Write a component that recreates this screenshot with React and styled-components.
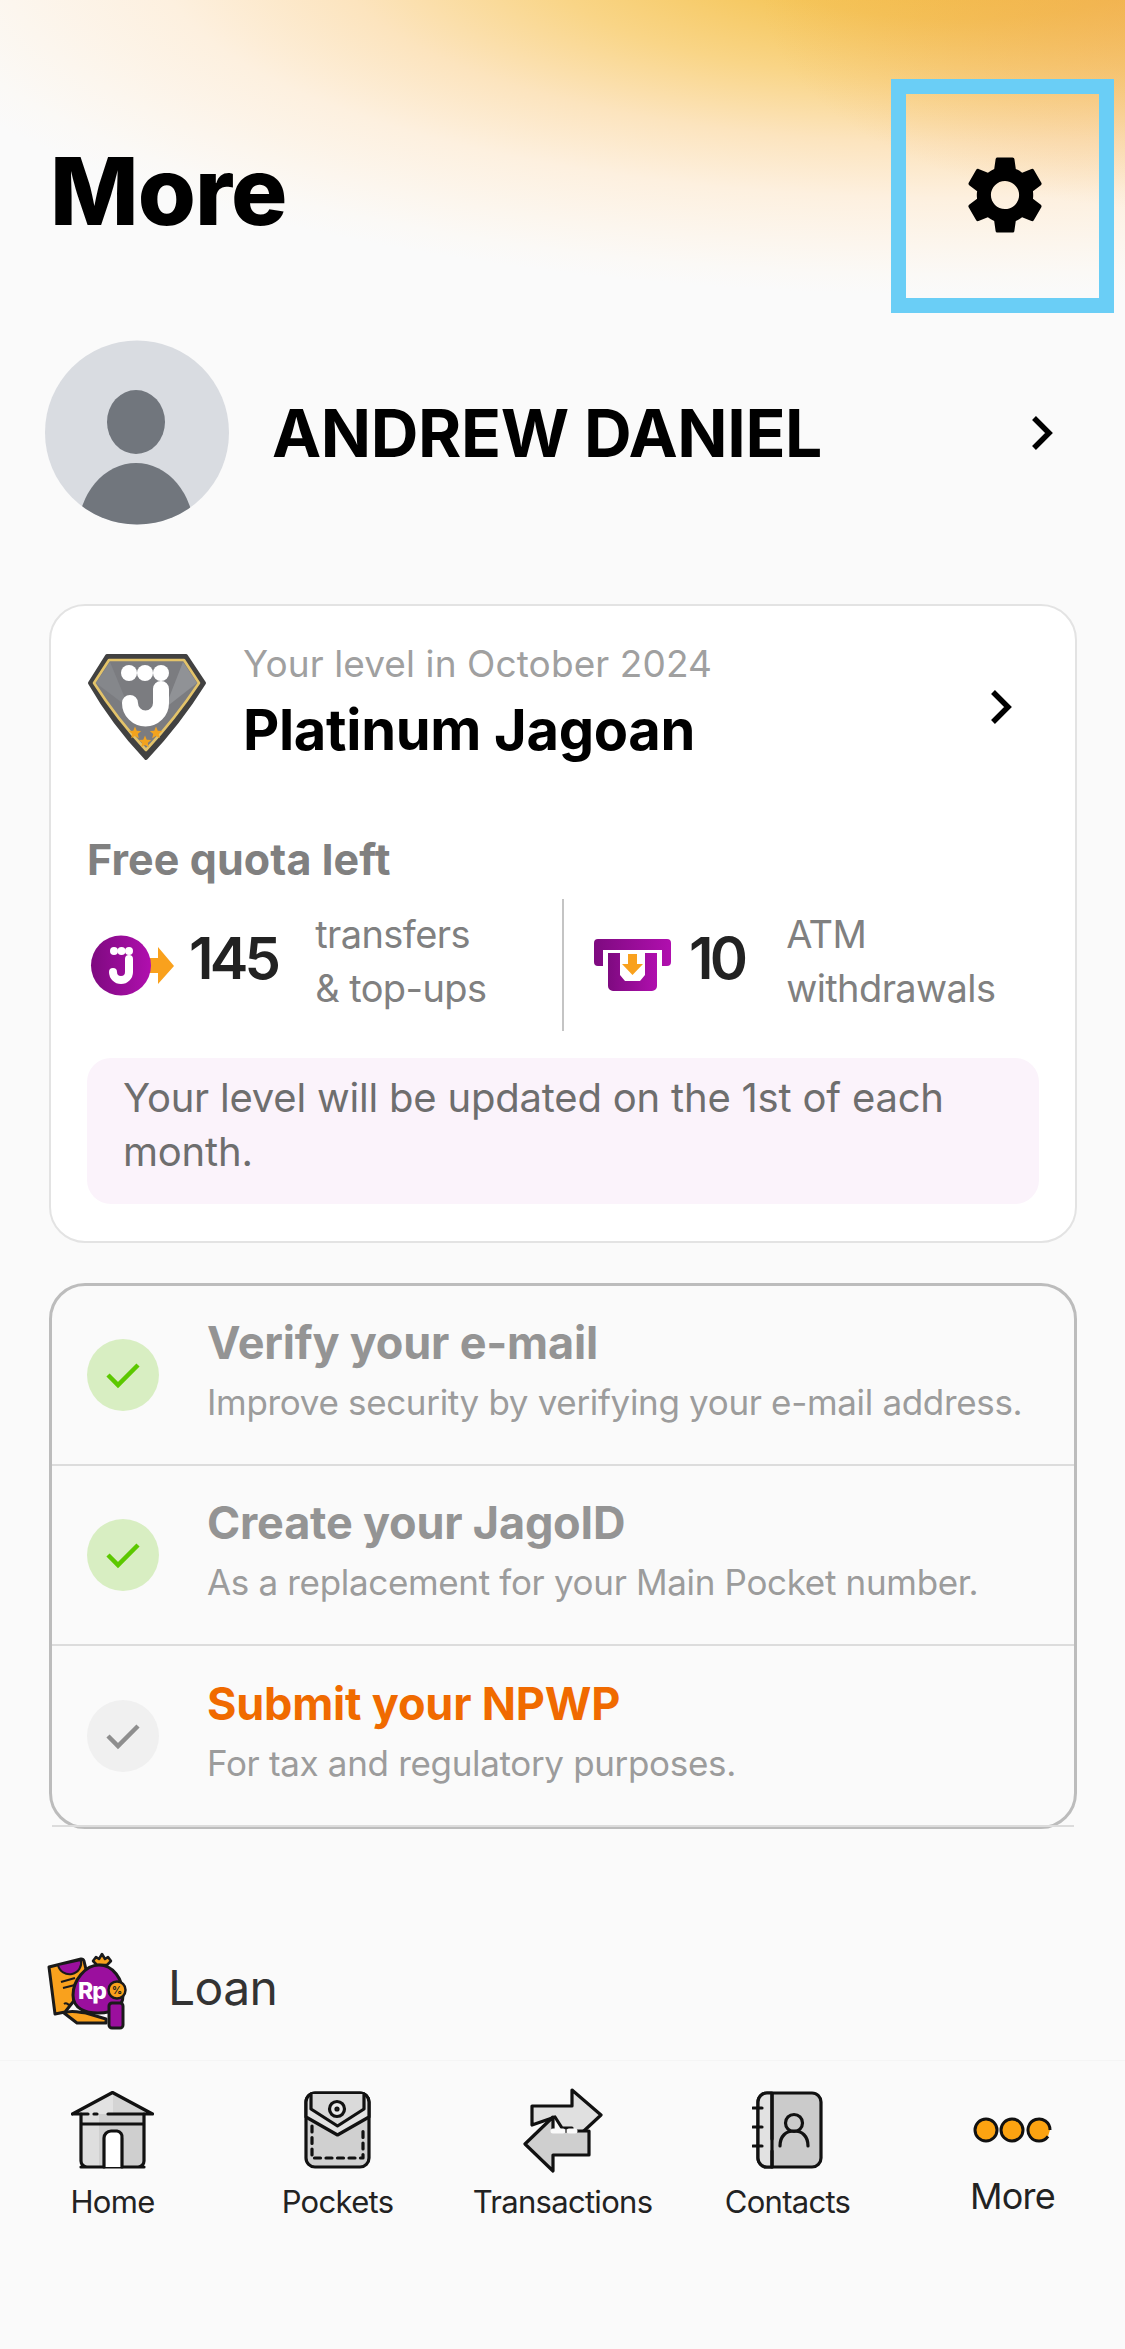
import React from "react";
import styled, { createGlobalStyle } from "styled-components";
import { MdSettings } from "react-icons/md";

const Global = createGlobalStyle`
  html, body { margin: 0; padding: 0; background: #fafafa; }
  * { box-sizing: border-box; }
  body { font-family: "Inter", "Liberation Sans", sans-serif; }
`;

const Page = styled.div`
  width: 1125px;
  height: 2349px;
  overflow: hidden;
  display: flex;
  flex-direction: column;
  background:
    radial-gradient(ellipse 420px 220px at 1180px -10px, rgba(238,160,70,.55) 0%, rgba(240,170,80,0) 100%),
    radial-gradient(ellipse 1120px 345px at 960px -50px, #f4bf45 0%, #f5c65a 20%, #f9d587 38%, #fce4be 56%, #fdf0df 72%, #fcf6ee 86%, #fbf9f6 94%, #fafafa 100%);
  background-repeat: no-repeat;
`;

const Header = styled.header`
  display: flex;
  align-items: center;
  justify-content: space-between;
  padding: 79px 11px 0 50px;
`;
const Title = styled.h1`
  margin: 0 0 10px;
  font-size: 94px;
  line-height: 1;
  font-weight: 800;
  letter-spacing: -0.9px;
  color: #000;
`;
const GearBox = styled.div`
  width: 223px;
  height: 234px;
  border: 15px solid #6acef6;
  display: flex;
  align-items: center;
  justify-content: center;
  padding-bottom: 2px;
  padding-left: 4px;
`;

const Profile = styled.section`
  display: flex;
  align-items: center;
  margin-top: 27px;
  padding: 0 71px 0 45px;
`;
const Name = styled.div`
  flex: 1;
  margin-left: 43px;
  font-size: 66px;
  font-weight: 700;
  letter-spacing: -0.4px;
  color: #000;
`;

const Card = styled.section`
  margin: ${(p) => p.$top}px 48px 0 49px;
  border-radius: 36px;
  border: ${(p) => (p.$strong ? "3px solid #bcbcbc" : "2px solid #e3e3e3")};
  background: ${(p) => (p.$strong ? "transparent" : "#fff")};
  height: ${(p) => p.$h}px;
`;
const LevelCard = styled(Card)`
  padding: 47px 36px 0 36px;
`;
const LevelRow = styled.div`
  display: flex;
  align-items: center;
`;
const LevelText = styled.div`
  flex: 1;
  align-self: flex-start;
  margin: -12px 0 -10px 36px;
`;
const LevelSub = styled.div`
  font-size: 37px;
  line-height: 46px;
  color: #a0a0a0;
  letter-spacing: 0.1px;
`;
const LevelName = styled.div`
  margin-top: 10px;
  font-size: 56px;
  line-height: 66px;
  font-weight: 700;
  letter-spacing: -0.3px;
  color: #000;
`;
const LevelChevron = styled.div`
  margin-right: 26px;
  display: flex;
`;
const QuotaLabel = styled.div`
  margin-top: 73px;
  font-size: 43px;
  line-height: 50px;
  font-weight: 700;
  letter-spacing: 0.1px;
  color: #808080;
`;
const Quotas = styled.div`
  display: flex;
  margin-top: 15px;
  height: 132px;
`;
const Quota = styled.div`
  display: flex;
  align-items: center;
  width: ${(p) => p.$w}px;
  padding-left: ${(p) => p.$pl}px;
  border-left: ${(p) => (p.$divider ? "2px solid #c4c4c4" : "none")};
`;
const QuotaNum = styled.div`
  font-size: 58px;
  font-weight: 600;
  margin-left: ${(p) => p.$ml}px;
  margin-bottom: 14px;
  letter-spacing: -3.8px;
  color: #222;
`;
const QuotaText = styled.div`
  margin-left: ${(p) => p.$ml}px;
  margin-bottom: 8px;
  font-size: 38px;
  line-height: 54px;
  color: #808080;
  letter-spacing: -0.6px;
`;
const Note = styled.div`
  margin-top: 27px;
  height: 146px;
  border-radius: 24px;
  background: #fbf3fb;
  padding: 13px 36px;
  font-size: 40px;
  line-height: 54px;
  letter-spacing: -0.2px;
  color: #6e6e6e;
`;

const TaskRow = styled.div`
  height: 180px;
  display: flex;
  align-items: center;
  padding-left: 35px;
  border-bottom: 2px solid #dcdcdc;
  &:last-child { height: 181px; }
`;
const TaskCircle = styled.div`
  width: 72px;
  height: 72px;
  border-radius: 50%;
  background: ${(p) => (p.$done ? "#d8eec2" : "#f0f0f0")};
  display: flex;
  align-items: center;
  justify-content: center;
  flex-shrink: 0;
`;
const TaskText = styled.div`
  margin-left: 48px;
  padding-bottom: 10px;
`;
const TaskTitle = styled.div`
  font-size: 45px;
  line-height: 56px;
  margin-bottom: 8px;
  font-weight: 700;
  letter-spacing: -0.2px;
  color: ${(p) => (p.$active ? "#f06a00" : "#949494")};
`;
const TaskSub = styled.div`
  font-size: 35px;
  line-height: 46px;
  letter-spacing: -0.33px;
  color: #9c9c9c;
`;

const Loan = styled.div`
  display: flex;
  align-items: center;
  margin-top: 123px;
  padding-left: 47px;
`;
const LoanLabel = styled.div`
  margin-left: 39px;
  padding-bottom: 8px;
  font-size: 48px;
  color: #333;
  letter-spacing: -0.6px;
`;

const Nav = styled.nav`
  margin-top: auto;
  height: 289px;
  background: #fafafa;
  border-top: 1px solid #f5f5f5;
  display: grid;
  grid-template-columns: repeat(5, 225px);
`;
const NavItem = styled.div`
  display: flex;
  flex-direction: column;
  align-items: center;
`;
const NavIcon = styled.div`
  height: 86px;
  margin-top: 26px;
  display: flex;
  align-items: center;
  justify-content: center;
`;
const NavLabel = styled.div`
  margin-top: 7px;
  font-size: 31px;
  line-height: 44px;
  letter-spacing: -0.7px;
  color: #222;
`;
const MoreLabel = styled(NavLabel)`
  margin-top: 1px;
  font-size: 36px;
`;

const Chevron = () => (
  <svg width="24" height="36" viewBox="0 0 24 36" fill="none">
    <path d="M4 3l15 15L4 33" stroke="#000" strokeWidth="5.5" />
  </svg>
);

const Avatar = () => (
  <svg width="184" height="185" viewBox="0 0 184 185">
    <defs>
      <clipPath id="av"><circle cx="92" cy="92.5" r="92" /></clipPath>
    </defs>
    <circle cx="92" cy="92.5" r="92" fill="#d9dce1" />
    <ellipse cx="91" cy="82" rx="29" ry="32" fill="#71767d" />
    <g clipPath="url(#av)">
      <ellipse cx="91" cy="192" rx="58" ry="69" fill="#71767d" />
    </g>
  </svg>
);

const Star = ({ x, y, r = 6.5 }) => {
  const pts = [];
  for (let i = 0; i < 10; i++) {
    const rad = i % 2 ? r * 0.45 : r;
    const a = -Math.PI / 2 + (i * Math.PI) / 5;
    pts.push(`${x + rad * Math.cos(a)},${y + rad * Math.sin(a)}`);
  }
  return <polygon points={pts.join(" ")} fill="#f2a31e" />;
};

const Badge = () => (
  <svg width="120" height="108" viewBox="0 0 120 108">
    <path d="M20 3H99L117 30Q92 70 59 105Q26 70 3 30Z" fill="#414141" stroke="#414141" strokeWidth="4" strokeLinejoin="round" />
    <path d="M22 7H97L112 30Q88 66 59 97Q30 66 7 30Z" fill="#7b7c80" stroke="#e3c36a" strokeWidth="2.600" strokeLinejoin="round" />
    <path d="M23 9L42 55 9 30Z" fill="#85878b" />
    <path d="M96 9L78 55 110 30Z" fill="#909296" />
    <g fill="#fff">
      <circle cx="42" cy="20" r="8" />
      <circle cx="58" cy="20" r="8" />
      <circle cx="74" cy="20" r="8" />
    </g>
    <path d="M74 36V50a15.500 15.500 0 0 1-31 0" fill="none" stroke="#fff" strokeWidth="16" strokeLinecap="round" />
    <Star x={48} y={80} />
    <Star x={58} y={89} />
    <Star x={69} y={80} />
  </svg>
);

const TransferIcon = () => (
  <svg width="84" height="63" viewBox="0 0 84 63">
    <defs>
      <linearGradient id="pur" x1="0" x2="1">
        <stop offset="0" stopColor="#7e0a80" />
        <stop offset="1" stopColor="#b00fae" />
      </linearGradient>
    </defs>
    <path d="M56 24H68V13L84 32 68 50V39H56Z" fill="#f9a11d" />
    <circle cx="31" cy="31.500" r="30" fill="url(#pur)" />
    <g fill="#fff">
      <circle cx="24" cy="17" r="4" />
      <circle cx="31.500" cy="17" r="4" />
      <circle cx="39" cy="17" r="4" />
    </g>
    <path d="M39 25V38a8 8 0 0 1-16 0" fill="none" stroke="#fff" strokeWidth="8" strokeLinecap="round" />
  </svg>
);

const AtmIcon = () => (
  <svg width="77" height="52" viewBox="0 0 77 52">
    <defs>
      <linearGradient id="atm" x1="0" x2="1">
        <stop offset="0" stopColor="#7e0a80" />
        <stop offset="1" stopColor="#b00fae" />
      </linearGradient>
    </defs>
    <path d="M4 0H73a4 4 0 0 1 4 4V23a4 4 0 0 1-4 4H68V11H9V27H4a4 4 0 0 1-4-4V4a4 4 0 0 1 4-4Z" fill="url(#atm)" />
    <path d="M14 14H26V36L31 42H46L51 36V14H63V47a5 5 0 0 1-5 5H19a5 5 0 0 1-5-5Z" fill="url(#atm)" />
    <path d="M34 15H43V25H49L38.500 36 28 25H34Z" fill="#f9a11d" />
  </svg>
);

const Check = ({ color }) => (
  <svg width="36" height="30" viewBox="0 0 36 30" fill="none">
    <path d="M3 15l10 10L33 5" stroke={color} strokeWidth="4.500" />
  </svg>
);

const LoanIcon = () => (
  <svg width="82" height="78" viewBox="0 0 82 78">
    <path d="M2 15L34 7a3 3 0 0 1 3 2L42 30 18 60 8 62Z" fill="#f9a11d" stroke="#1a1a1a" strokeWidth="3" strokeLinejoin="round" />
    <path d="M11 13L34 8a10 10 0 0 1-23 5Z" fill="#9b0f9e" stroke="#1a1a1a" strokeWidth="2" />
    <path d="M14 30L28 26M16 36L28 33M17 52c4-3 4 4 8-1" stroke="#1a1a1a" strokeWidth="2" fill="none" />
    <path d="M17 61c6-3 14-1 22 0l20 6v4H30Z" fill="#f9a11d" stroke="#1a1a1a" strokeWidth="3" strokeLinejoin="round" />
    <path d="M50 13l-4-4 3-4 3 2 3-5 3 5 3-2 3 4-4 4Z" fill="#f9a11d" stroke="#1a1a1a" strokeWidth="2.500" strokeLinejoin="round" />
    <path d="M52 13c14 0 24 14 24 30 0 12-8 18-25 18-12 0-25-4-25-18 0-14 12-30 26-30Z" fill="#9b0f9e" stroke="#1a1a1a" strokeWidth="3" />
    <text x="31" y="47" fontFamily="Inter, sans-serif" fontWeight="800" fontSize="23" fill="#fff" letterSpacing="-1">Rp</text>
    <circle cx="70" cy="38" r="8.500" fill="#f9a11d" stroke="#1a1a1a" strokeWidth="2.500" />
    <text x="70" y="42" textAnchor="middle" fontFamily="Inter, sans-serif" fontWeight="700" fontSize="10" fill="#1a1a1a">%</text>
    <rect x="62" y="51" width="14" height="25" rx="3" fill="#9b0f9e" stroke="#1a1a1a" strokeWidth="3" />
  </svg>
);

const HomeIcon = () => (
  <svg width="83" height="78" viewBox="0 0 83 78" fill="none" stroke="#111" strokeWidth="3.200" strokeLinecap="round" strokeLinejoin="round">
    <path d="M1.500 23L41.500 1.500 81.500 23Z" fill="#e2e2e2" stroke="none" />
    <path d="M42 2L81.500 23H42Z" fill="#d4d4d4" stroke="none" />
    <rect x="10" y="23" width="63" height="53" fill="#dedede" stroke="none" />
    <path d="M28 23H73V76H28Z" fill="#cfcfcf" stroke="none" />
    <path d="M1.500 23L41.500 1.500 81.500 23H37M26 23H23M17 23H1.500" />
    <path d="M10 23V70a6 6 0 0 0 6 6H67a6 6 0 0 0 6-6V23M10 33H73M10 76H73" />
    <path d="M33 76V47a7 7 0 0 1 7-7H46a6 6 0 0 1 5 7V76" fill="#fff" />
  </svg>
);

const PocketIcon = () => (
  <svg width="67" height="78" viewBox="0 0 67 78" fill="none" stroke="#111" strokeWidth="3.200" strokeLinecap="round" strokeLinejoin="round">
    <rect x="2" y="2" width="63" height="74" rx="9" fill="#d0d0d0" />
    <path d="M2 26V11a9 9 0 0 1 9-9H56a9 9 0 0 1 9 9V26L33.500 44Z" fill="#e2e2e2" />
    <path d="M7 3V18L33.500 35 60 18V3" fill="#dadada" />
    <circle cx="33" cy="18" r="7.500" fill="#e8e8e8" />
    <circle cx="33" cy="18" r="1" fill="#111" />
    <path d="M8 35V67H59V35" strokeDasharray="6 5.500" />
  </svg>
);

const TransIcon = () => (
  <svg width="80" height="86" viewBox="0 0 80 86" fill="none" stroke="#111" strokeWidth="3.200" strokeLinecap="round" strokeLinejoin="round">
    <path d="M9 19H49V3L78 28 49 55V41H39L32 30 9 38Z" fill="#e0e0e0" />
    <path d="M30 30L2 57 30 84V68H66V44H30Z" fill="#cfcfcf" />
    <path d="M30 44H40M46 44H52" stroke="#fafafa" strokeWidth="5" />
  </svg>
);

const ContactIcon = () => (
  <svg width="71" height="78" viewBox="0 0 71 78" fill="none" stroke="#111" strokeWidth="3.200" strokeLinecap="round" strokeLinejoin="round">
    <rect x="6" y="2" width="63" height="74" rx="9" fill="#cbcbcb" />
    <path d="M15 2H15A9 9 0 0 0 6 11V67a9 9 0 0 0 9 9H20V2Z" fill="#e2e2e2" />
    <path d="M20 3V48M20 60V76" />
    <path d="M1 17H10M1 36H10M1 55H10" />
    <circle cx="42" cy="32" r="8.500" />
    <path d="M28 55c0-10 6-15 14-15s14 5 14 15" />
  </svg>
);

const DotsIcon = () => (
  <svg width="80" height="26" viewBox="0 0 80 26" fill="#fca311" stroke="#111" strokeWidth="3">
    <circle cx="13" cy="13" r="11" />
    <circle cx="39" cy="13" r="11" />
    <path d="M75 19.300A11 11 0 1 1 77 13" />
  </svg>
);

const tasks = [
  { title: "Verify your e-mail", sub: "Improve security by verifying your e-mail address.", done: true },
  { title: "Create your JagoID", sub: "As a replacement for your Main Pocket number.", done: true },
  { title: "Submit your NPWP", sub: "For tax and regulatory purposes.", done: false },
];

const navItems = [
  { label: "Home", Icon: HomeIcon },
  { label: "Pockets", Icon: PocketIcon },
  { label: "Transactions", Icon: TransIcon },
  { label: "Contacts", Icon: ContactIcon },
];

export default function App() {
  return (
    <Page>
      <Global />
      <Header>
        <Title>More</Title>
        <GearBox>
          <MdSettings size={94} color="#000" />
        </GearBox>
      </Header>
      <Profile>
        <Avatar />
        <Name>ANDREW DANIEL</Name>
        <Chevron />
      </Profile>
      <LevelCard $top={79} $h={639}>
        <LevelRow>
          <Badge />
          <LevelText>
            <LevelSub>Your level in October 2024</LevelSub>
            <LevelName>Platinum Jagoan</LevelName>
          </LevelText>
          <LevelChevron><Chevron /></LevelChevron>
        </LevelRow>
        <QuotaLabel>Free quota left</QuotaLabel>
        <Quotas>
          <Quota $w={475} $pl={3}>
            <TransferIcon />
            <QuotaNum $ml={15}>145</QuotaNum>
            <QuotaText $ml={38}>transfers<br />&amp; top-ups</QuotaText>
          </Quota>
          <Quota $w={470} $pl={30} $divider>
            <AtmIcon />
            <QuotaNum $ml={18}>10</QuotaNum>
            <QuotaText $ml={42}>ATM<br />withdrawals</QuotaText>
          </Quota>
        </Quotas>
        <Note>Your level will be updated on the 1st of each month.</Note>
      </LevelCard>
      <Card $top={40} $h={546} $strong>
        {tasks.map((t) => (
          <TaskRow key={t.title}>
            <TaskCircle $done={t.done}>
              <Check color={t.done ? "#5cc800" : "#8e8e8e"} />
            </TaskCircle>
            <TaskText>
              <TaskTitle $active={!t.done}>{t.title}</TaskTitle>
              <TaskSub>{t.sub}</TaskSub>
            </TaskText>
          </TaskRow>
        ))}
      </Card>
      <Loan>
        <LoanIcon />
        <LoanLabel>Loan</LoanLabel>
      </Loan>
      <Nav>
        {navItems.map(({ label, Icon }) => (
          <NavItem key={label}>
            <NavIcon><Icon /></NavIcon>
            <NavLabel>{label}</NavLabel>
          </NavItem>
        ))}
        <NavItem>
          <NavIcon><DotsIcon /></NavIcon>
          <MoreLabel>More</MoreLabel>
        </NavItem>
      </Nav>
    </Page>
  );
}
